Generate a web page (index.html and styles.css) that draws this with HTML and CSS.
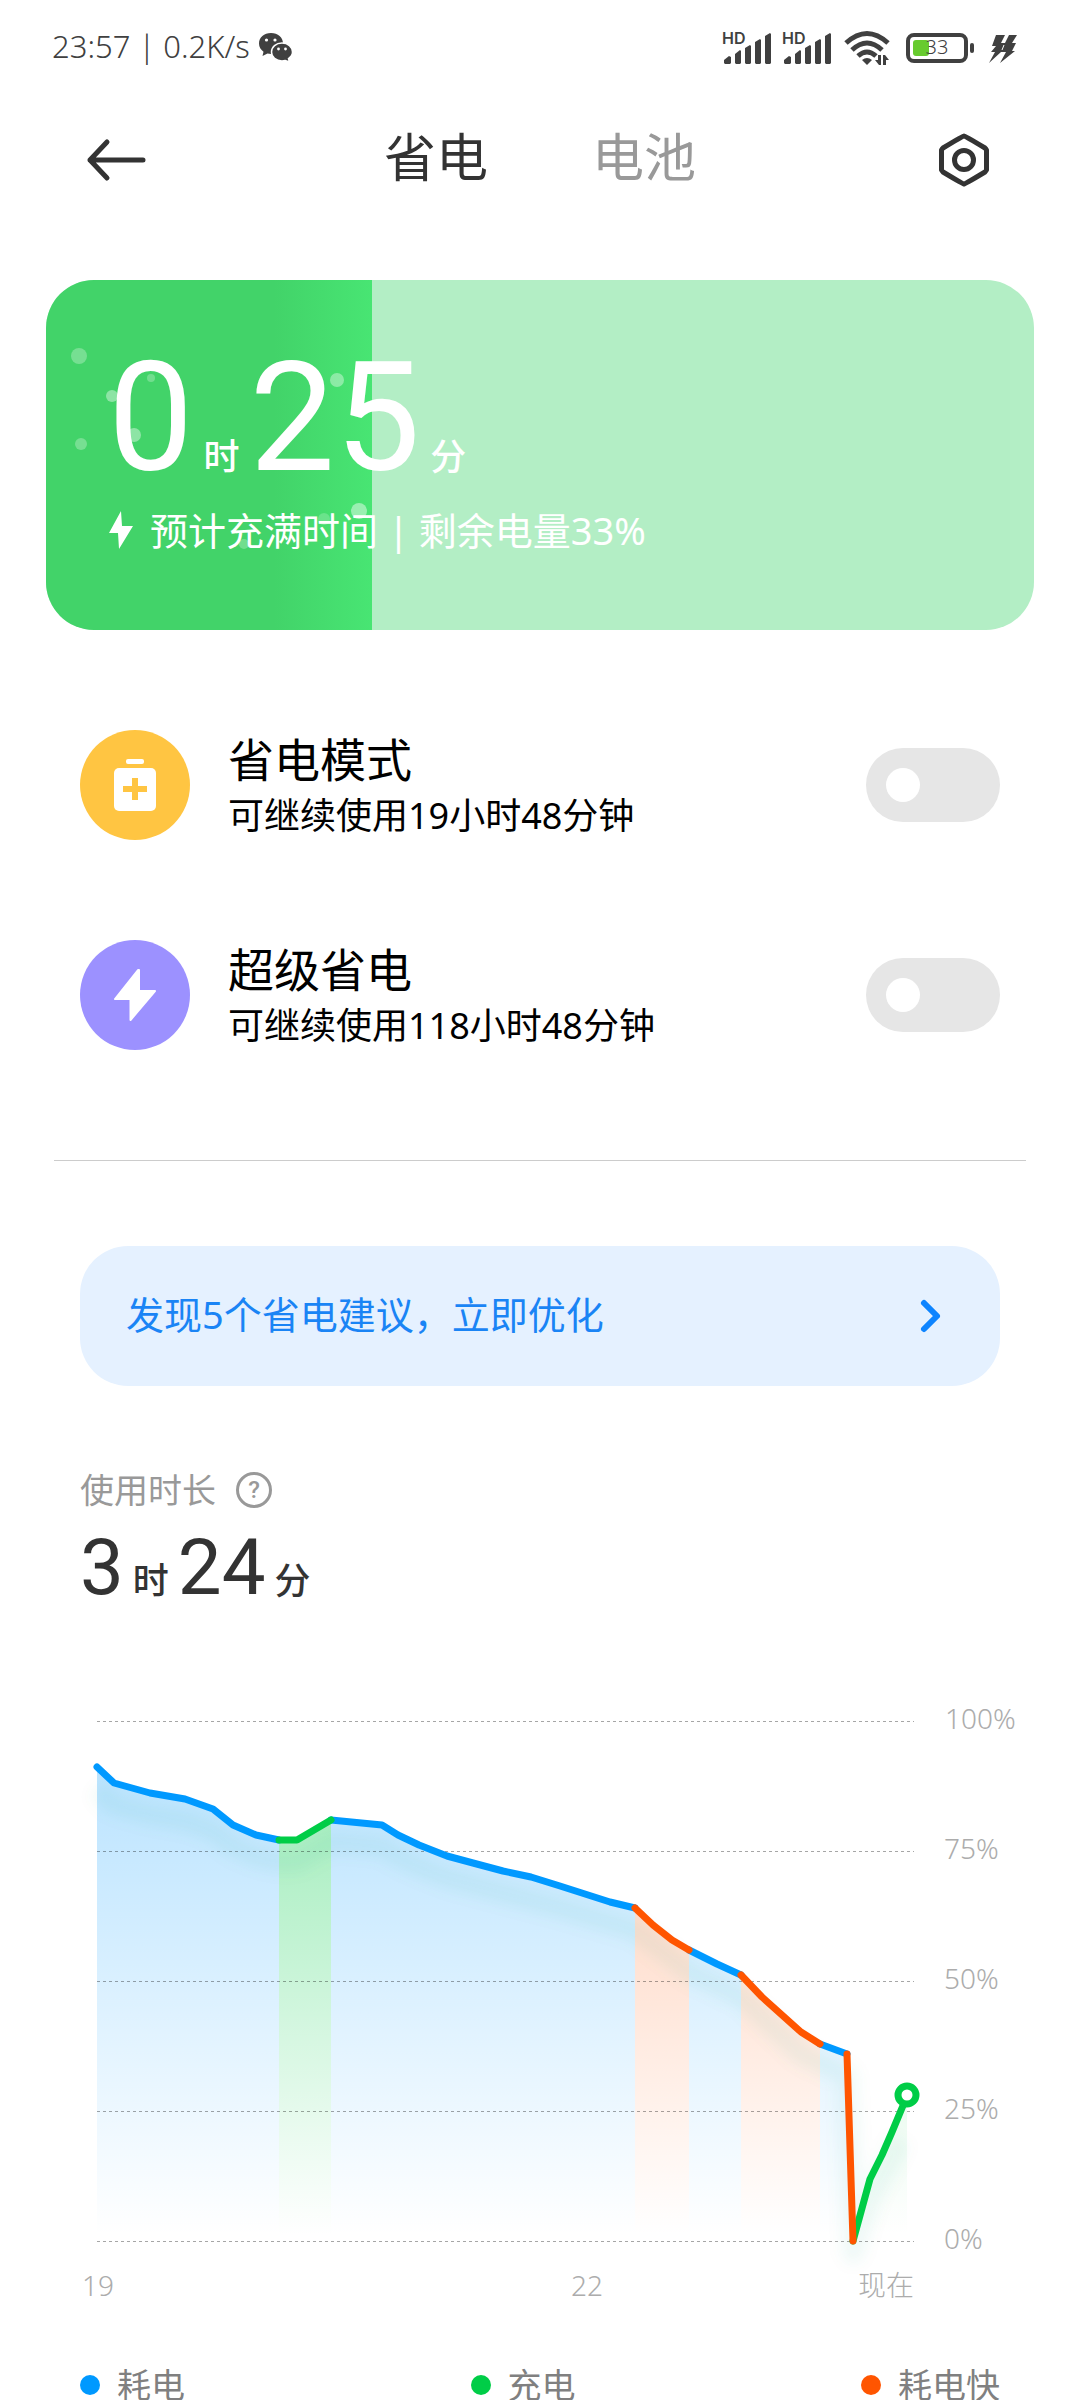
FILE: index.html
```html
<!DOCTYPE html>
<html lang="zh-CN">
<head>
<meta charset="utf-8">
<meta name="viewport" content="width=device-width, initial-scale=1">
<title>省电</title>
<link rel="stylesheet" href="styles.css">
</head>
<body>
<div class="screen">
  <div class="status">
    <span class="status-text">23:57 | 0.2K/s</span>
    <svg class="wechat" width="36" height="32" viewBox="0 0 36 32" fill="#404040">
      <path d="M13 1C6 1 1 5.500 1 11.500c0 3.500 1.800 6.300 4.500 8.200L4.500 24l5-2.500c1.200.3 2.300.5 3.500.5C20 22 25 17.500 25 11.500S20 1 13 1z"/>
      <path d="M24 11c-6 0-10.500 4-10.500 9s4.500 9 10.500 9c1.200 0 2.300-.2 3.300-.5L31.500 30l-1-3.500c2.400-1.600 4-3.900 4-6.500 0-5-4.500-9-10.500-9z" stroke="#fff" stroke-width="1.500"/>
      <g fill="#fff"><circle cx="8.500" cy="8" r="1.600"/><circle cx="17" cy="8" r="1.600"/><circle cx="20.500" cy="17" r="1.400"/><circle cx="27.500" cy="17" r="1.400"/></g>
    </svg>
    <span class="status-space"></span>
    <span class="signal"><b class="hd">HD</b><svg width="50" height="36" viewBox="0 0 50 36" fill="#404040"><path d="M2 33v-3l5-4 2 1v6l-1 1H3zM13 33v-9l5-4 1 1v12l-1 1h-4zM23 33V18l5-3 1 1v17l-1 1h-4zM33 33V12l5-3 1 1v23l-1 1h-4zM43 33V6l5-3 1 1v29l-1 1h-4z"/></svg></span>
    <span class="signal"><b class="hd">HD</b><svg width="50" height="36" viewBox="0 0 50 36" fill="#404040"><path d="M2 33v-3l5-4 2 1v6l-1 1H3zM13 33v-9l5-4 1 1v12l-1 1h-4zM23 33V18l5-3 1 1v17l-1 1h-4zM33 33V12l5-3 1 1v23l-1 1h-4zM43 33V6l5-3 1 1v29l-1 1h-4z"/></svg></span>
    <svg class="wifi" width="48" height="36" viewBox="0 0 48 36" fill="none" stroke="#404040" stroke-width="5">
      <path d="M2 13Q23-6 44 13M8 20Q23 6 38 20M14 26Q23 18 32 26"/>
      <path d="M18 30q5-4 10 0l-5 5z" fill="#404040" stroke="none"/>
      <path d="M37 25v10h-2l-4-5h3v-5zM39 35V25h2l4 5h-3v5z" fill="#404040" stroke="none"/>
    </svg>
    <span class="battery"><span class="battery-level"></span><span class="battery-num">33</span></span>
    <svg class="charge" width="32" height="32" viewBox="0 0 32 32" fill="#404040"><path d="M8 3h9l-4 8h4l4-8h8l-5 8h4l-4 8h3L12 31l6-11h-5L1 31l6-11H3l5-6H4z"/><path d="M16 13l-2 5" stroke="#fff" stroke-width="1"/></svg>
  </div>

  <header class="bar">
    <button class="icon-btn" aria-label="返回"><svg width="60" height="60" viewBox="0 0 60 60" fill="none" stroke="#333" stroke-width="5" stroke-linecap="round" stroke-linejoin="round"><path d="M21 12L4 30l17 18M4 30h53"/></svg></button>
    <nav class="tabs"><a class="tab active" href="#save">省电</a><a class="tab" href="#battery">电池</a></nav>
    <button class="icon-btn" aria-label="设置"><svg width="60" height="60" viewBox="0 0 60 60" fill="none" stroke="#333" stroke-width="5" stroke-linejoin="round"><path d="M30 6Q31 6 51 18Q52 19 52.500 20V40Q52 41 51 42Q31 54 30 54Q29 54 9 42Q8 41 7.500 40V20Q8 19 9 18Q29 6 30 6z"/><circle cx="30" cy="30" r="9.500"/></svg></button>
  </header>

  <main class="content">
    <section class="card">
      <div class="card-fill" style="width:33%"></div>
      <svg class="bubbles" width="340" height="350" viewBox="0 0 340 350" fill="#fff"><circle cx="33" cy="76" r="8" opacity=".28"/><circle cx="105" cy="98" r="4" opacity=".25"/><circle cx="66" cy="116" r="6" opacity=".4"/><circle cx="88" cy="155" r="7" opacity=".4"/><circle cx="35" cy="164" r="6" opacity=".28"/><circle cx="291" cy="100" r="7" opacity=".38"/><circle cx="313" cy="231" r="8" opacity=".45"/><circle cx="278" cy="239" r="6" opacity=".2"/><circle cx="198" cy="264" r="5" opacity=".25"/></svg>
      <div class="card-body">
        <p class="time big"><span>0</span><small>时</small><span>25</span><small>分</small></p>
        <p class="card-note"><svg width="26" height="40" viewBox="0 0 26 40" fill="#fff"><path d="M13 1L1 23h9l1 16 14-23h-11z"/></svg><span>预计充满时间 | 剩余电量33%</span></p>
      </div>
    </section>

    <section class="modes">
      <label class="mode">
        <svg class="mode-icon" width="110" height="110" viewBox="0 0 110 110"><circle cx="55" cy="55" r="55" fill="#ffc542"/><rect x="46" y="29" width="18" height="5" rx="2" fill="#fff"/><rect x="34" y="38" width="42" height="43" rx="5" fill="#fff"/><path d="M55 48v22M43 59h24" stroke="#ffc542" stroke-width="6"/></svg>
        <span class="mode-text"><span class="mode-name">省电模式</span><span class="mode-info">可继续使用19小时48分钟</span></span>
        <input class="switch" type="checkbox" role="switch">
      </label>
      <label class="mode">
        <svg class="mode-icon" width="110" height="110" viewBox="0 0 110 110"><circle cx="55" cy="55" r="55" fill="#9c91ff"/><path d="M58 30L35 59h15.500v21L75 51H59V30z" fill="#fff" stroke="#fff" stroke-width="2" stroke-linejoin="round"/></svg>
        <span class="mode-text"><span class="mode-name">超级省电</span><span class="mode-info">可继续使用118小时48分钟</span></span>
        <input class="switch" type="checkbox" role="switch">
      </label>
    </section>

    <hr class="rule">

    <button class="advice"><span>发现5个省电建议，立即优化</span><svg width="24" height="36" viewBox="0 0 24 36" fill="none" stroke="#0d84ff" stroke-width="6" stroke-linecap="round" stroke-linejoin="round"><path d="M6 5l13 13L6 31"/></svg></button>

    <section class="usage">
      <h2 class="usage-title">使用时长 <button class="help" aria-label="说明">?</button></h2>
      <p class="time mid"><span>3</span><small>时</small><span>24</span><small>分</small></p>
    </section>

    <svg class="chart" viewBox="0 0 1080 640" role="img" aria-label="电量曲线">
      <defs>
        <linearGradient id="gb" gradientUnits="userSpaceOnUse" x1="0" y1="87" x2="0" y2="555"><stop offset="0" stop-color="#09f" stop-opacity=".27"/><stop offset="1" stop-color="#09f" stop-opacity="0"/></linearGradient>
        <linearGradient id="gg" gradientUnits="userSpaceOnUse" x1="0" y1="140" x2="0" y2="555"><stop offset="0" stop-color="#00cd47" stop-opacity=".34"/><stop offset="1" stop-color="#00cd47" stop-opacity="0"/></linearGradient>
        <linearGradient id="go" gradientUnits="userSpaceOnUse" x1="0" y1="228" x2="0" y2="555"><stop offset="0" stop-color="#ff5500" stop-opacity=".2"/><stop offset="1" stop-color="#ff5500" stop-opacity="0"/></linearGradient>
        <filter id="soft" x="-5%" y="-10%" width="110%" height="120%"><feGaussianBlur stdDeviation="7"/></filter>
      </defs>
      <g stroke="none">
        <path fill="url(#gb)" d="M97 561V87L114 103L150 113L185 119L213 129L233 145L256 155L279 160V561z"/>
        <path fill="url(#gg)" d="M279 561V160H297L331 140V561z"/>
        <path fill="url(#gb)" d="M331 561V140L382 145L398 155L419 165L447 176L473 183L503 191L531 197L560 206L610 222L635 228V561z"/>
        <path fill="url(#go)" d="M635 561V228L653 245L672 260L689 270V561z"/>
        <path fill="url(#gb)" d="M689 561V270L717 284L741 295V561z"/>
        <path fill="url(#go)" d="M741 561V295L762 317L801 352L820 364V561z"/>
        <path fill="url(#gb)" d="M820 561V364L847 374L853 561z"/>
        <path fill="url(#gg)" opacity=".7" d="M853 561L870 499L882 475L892 452L907 416V561z"/>
      </g>
      <path class="glow" filter="url(#soft)" d="M97 109L114 125L150 135L185 141L213 151L233 167L256 177L279 182H297L331 162L382 167L398 177L419 187L447 198L503 213L560 228L635 250L689 292L741 317L801 374L847 396L853 573L870 519L900 460"/>
      <path class="grid" d="M97 41H914M97 171H914M97 301H914M97 431H914M97 561H914"/>
      <g class="line">
        <path stroke="#09f" d="M97 87L114 103L150 113L185 119L213 129L233 145L256 155L279 160M331 140L382 145L398 155L419 165L447 176L473 183L503 191L531 197L560 206L610 222L635 228M689 270L717 284L741 295M820 364L847 374"/>
        <path stroke="#00cd47" d="M279 160H297L331 140M853 561L870 499L882 475L892 452L907 416"/>
        <path stroke="#ff5500" d="M635 228L653 245L672 260L689 270M741 295L762 317L801 352L820 364M847 374L853 561"/>
        <circle cx="907" cy="415" r="9" fill="#fff" stroke="#00cd47"/>
      </g>
      <g class="axis">
        <text x="945" y="49">100%</text><text x="944" y="179">75%</text><text x="944" y="309">50%</text><text x="944" y="439">25%</text><text x="944" y="569">0%</text>
        <text x="98" y="616" text-anchor="middle">19</text><text x="587" y="616" text-anchor="middle">22</text><text x="914" y="616" text-anchor="end">现在</text>
      </g>
    </svg>

    <ul class="legend"><li class="use">耗电</li><li class="fill">充电</li><li class="fast">耗电快</li></ul>
  </main>
</div>
</body>
</html>
```
FILE: styles.css
```css
* { box-sizing: border-box; }
body { margin: 0; background: #fff; color: #333; font-family: "Noto Sans", "Noto Sans CJK SC", sans-serif; }
p, h2, ul { margin: 0; padding: 0; font-weight: inherit; }
button { border: 0; padding: 0; background: none; font: inherit; color: inherit; }
svg { display: block; flex: none; }

.screen { display: flex; flex-direction: column; height: 100vh; overflow: hidden; }

.status { display: flex; align-items: center; flex: none; height: 96px; padding: 0 60px 0 52px; color: #404040; font-weight: 300; }
.status-text { padding-bottom: 4px; font-size: 31px; line-height: 40px; white-space: nowrap; }
.wechat { margin-left: 8px; }
.status-space { flex: 1; }
.signal { position: relative; margin-right: 10px; }
.hd { position: absolute; left: 0; top: 0; font: 600 16px/16px Inter, sans-serif; }
.wifi { margin-left: 2px; margin-right: 14px; }
.battery { position: relative; width: 62px; height: 30px; border: 4px solid #404040; border-radius: 8px; padding: 3px; }
.battery::after { content: ""; position: absolute; right: -10px; top: 6px; width: 4px; height: 10px; border-radius: 2px; background: #404040; }
.battery-level { display: block; width: 16px; height: 16px; border-radius: 3px; background: #67cb2e; }
.battery-num { position: absolute; left: 0; right: 0; top: 0; text-align: center; font-size: 20px; line-height: 20px; }
.charge { margin-left: 20px; }

.bar { display: flex; align-items: center; justify-content: space-between; flex: none; height: 128px; padding: 0 86px; }
.icon-btn { width: 60px; height: 60px; }
.tabs { display: flex; gap: 104px; padding-bottom: 6px; }
.tab { font-size: 52px; line-height: 64px; color: #999; text-decoration: none; }
.tab.active { color: #333; }

.content { flex: 1; min-height: 0; overflow: hidden; }

.card { position: relative; overflow: hidden; height: 350px; margin: 56px 46px 0; border-radius: 48px; background: #b3eec5; color: #fff; }
.card-fill { position: absolute; left: 0; top: 0; bottom: 0; background: linear-gradient(90deg, #42d369 70%, #48e573); }
.bubbles { position: absolute; left: 0; top: 0; }
.card-body { position: relative; padding: 66px 62px 0; }
.time { display: flex; align-items: baseline; font-family: Roboto, "Noto Sans CJK SC", sans-serif; }
.time small { font-size: 36px; font-weight: 500; line-height: 36px; }
.big { font-size: 152px; line-height: 144px; gap: 10px; }
.card-note { display: flex; align-items: center; gap: 16px; margin-top: 16px; font-size: 38px; line-height: 48px; white-space: nowrap; }

.modes { display: grid; gap: 100px; padding: 100px 80px 0; }
.mode { display: flex; align-items: center; color: #000; }
.mode-text { display: flex; flex-direction: column; flex: 1; gap: 6px; margin-left: 38px; padding-top: 2px; }
.mode-name { font-size: 46px; line-height: 54px; }
.mode-info { font-size: 36px; line-height: 48px; }
.switch { appearance: none; flex: none; width: 134px; height: 74px; margin: 0; padding: 20px; border-radius: 37px; background: #e6e6e6; }
.switch::before { content: ""; display: block; width: 34px; height: 34px; border-radius: 50%; background: #fff; }
.switch:checked { background: #09f; }
.switch:checked::before { margin-left: auto; }

.rule { height: 1px; margin: 110px 54px 0; border: 0; background: #ccc; }

.advice { display: flex; align-items: center; justify-content: space-between; width: calc(100% - 160px); height: 140px; margin: 85px 80px 0; padding: 0 58px 0 46px; border-radius: 48px; background: #e5f1ff; color: #1a84f5; font-size: 38px; }
.advice span { padding-bottom: 8px; }

.usage { padding: 80px 80px 0; }
.usage-title { display: flex; align-items: center; gap: 20px; font-size: 34px; line-height: 48px; color: #999; }
.help { width: 36px; height: 36px; border: 3px solid #999; border-radius: 50%; font: 500 24px/30px Roboto, sans-serif; }
.mid { font-size: 78px; line-height: 92px; gap: 9px; margin-top: 8px; }

.chart { width: 100%; margin-top: 66px; overflow: visible; }
.grid { stroke: #000; stroke-opacity: .35; stroke-dasharray: 3 3; fill: none; shape-rendering: crispEdges; }
.line path, .line circle { stroke-width: 7; stroke-linejoin: round; }
.line path { fill: none; stroke-linecap: round; }
.glow { fill: none; stroke: #00a070; stroke-opacity: .06; stroke-width: 22; stroke-linejoin: round; }
.axis { font-size: 28px; font-weight: 300; fill: #acacac; }

.legend { display: flex; justify-content: space-between; padding: 41px 80px 0; list-style: none; font-size: 34px; line-height: 48px; color: #808080; }
.legend li { display: flex; align-items: center; gap: 17px; }
.legend li::before { content: ""; width: 20px; height: 20px; border-radius: 50%; background: #09f; }
.legend .fill::before { background: #00cd47; }
.legend .fast::before { background: #ff5500; }
```
